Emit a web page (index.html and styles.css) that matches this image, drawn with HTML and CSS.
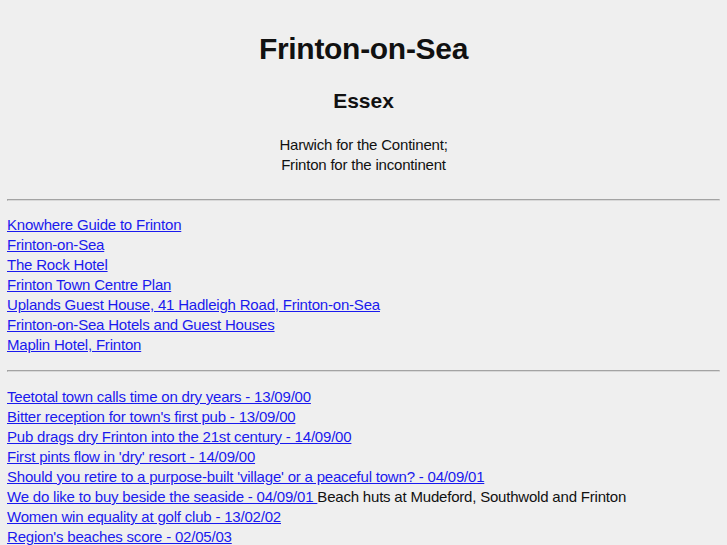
FILE: index.html
```html
<!DOCTYPE html>
<html>
<head>
<meta charset="utf-8">
<title>Frinton-on-Sea</title>
<link rel="stylesheet" href="styles.css">
</head>
<body>
<h1 class="title">Frinton-on-Sea</h1>
<h2 class="subtitle">Essex</h2>
<p class="motto">Harwich for the Continent;<br>Frinton for the incontinent</p>
<hr class="rule rule-top">
<div class="links">
<a href="#">Knowhere Guide to Frinton</a><br>
<a href="#">Frinton-on-Sea</a><br>
<a href="#">The Rock Hotel</a><br>
<a href="#">Frinton Town Centre Plan</a><br>
<a href="#">Uplands Guest House, 41 Hadleigh Road, Frinton-on-Sea</a><br>
<a href="#">Frinton-on-Sea Hotels and Guest Houses</a><br>
<a href="#">Maplin Hotel, Frinton</a>
</div>
<hr class="rule rule-mid">
<div class="links">
<a href="#">Teetotal town calls time on dry years - 13/09/00</a><br>
<a href="#">Bitter reception for town's first pub - 13/09/00</a><br>
<a href="#">Pub drags dry Frinton into the 21st century - 14/09/00</a><br>
<a href="#">First pints flow in 'dry' resort - 14/09/00</a><br>
<a href="#">Should you retire to a purpose-built 'village' or a peaceful town? - 04/09/01</a><br>
<a href="#">We do like to buy beside the seaside - 04/09/01 </a> Beach huts at Mudeford, Southwold and Frinton<br>
<a href="#">Women win equality at golf club - 13/02/02</a><br>
<a href="#">Region's beaches score - 02/05/03</a>
</div>
</body>
</html>
```
FILE: styles.css
```css
html { background: #efefef; }
body {
  margin: 0 7px;
  font-family: "Liberation Sans", Arial, sans-serif;
  font-size: 15px;
  letter-spacing: -0.2px;
  color: #111;
  background: #efefef;
}
.title {
  text-align: center;
  font-size: 30px;
  letter-spacing: -0.3px;
  font-weight: bold;
  margin: 0;
  padding-top: 31px;
  line-height: 36px;
}
.subtitle {
  text-align: center;
  font-size: 21px;
  letter-spacing: 0;
  font-weight: bold;
  margin: 21px 0 0;
  line-height: 26px;
}
.motto {
  text-align: center;
  margin: 21px 0 0;
  line-height: 20px;
}
.rule {
  height: 0;
  margin: 0;
  border-style: solid;
  border-width: 1px;
  border-color: #a3a3a3 #d8d8d8 #d8d8d8 #a3a3a3;
}
.rule-top {
  margin-top: 24px;
  margin-bottom: 14px;
}
.rule-mid {
  margin-top: 15px;
  margin-bottom: 15px;
}
.links {
  line-height: 20px;
}
.links a {
  color: #1a1aee;
}
```
